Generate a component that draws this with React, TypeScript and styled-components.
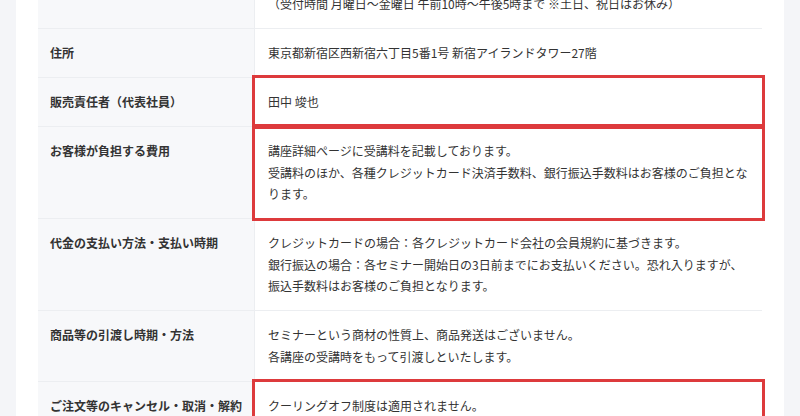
import React from "react";
import styled, { createGlobalStyle } from "styled-components";

const GlobalStyle = createGlobalStyle`
  html, body { margin: 0; padding: 0; }
  body {
    background: #f4f5f8;
    font-family: "Noto Sans CJK JP", "Noto Sans", sans-serif;
    color: #333;
    -webkit-font-smoothing: antialiased;
  }
`;

const Page = styled.div`
  padding: 0 16px;
  height: 416px;
  overflow: hidden;
`;

const Card = styled.div`
  background: #fff;
  padding: 0 22px;
  height: 416px;
  overflow: hidden;
`;

const Table = styled.div`
  margin-top: -41.5px;
  display: flex;
  flex-direction: column;
`;

const Row = styled.div`
  display: grid;
  grid-template-columns: 217px 1fr;
  border-bottom: 1px solid #eceef1;
`;

const Label = styled.div`
  background: #f7f8fa;
  border-right: 1px solid #eceef1;
  padding: 13.25px 12px;
  font-size: 12px;
  line-height: 21.5px;
  font-weight: 700;
  color: #333;
`;

const Value = styled.div<{ $marked?: boolean }>`
  padding: 13.25px 13px;
  font-size: 12px;
  line-height: 21.5px;
  color: #333;
  position: relative;
  z-index: ${(p) => (p.$marked ? 1 : 0)};
  outline: ${(p) => (p.$marked ? "3px solid #dd3a3c" : "none")};
`;

const Line = styled.div``;

type Item = { label: string; lines: string[]; marked?: boolean };

const items: Item[] = [
  {
    label: "電話番号",
    lines: [
      "03-0000-0000",
      "（受付時間 月曜日〜金曜日 午前10時〜午後5時まで ※土日、祝日はお休み）",
    ],
  },
  { label: "住所", lines: ["東京都新宿区西新宿六丁目5番1号 新宿アイランドタワー27階"] },
  { label: "販売責任者（代表社員）", lines: ["田中 竣也"], marked: true },
  {
    label: "お客様が負担する費用",
    lines: [
      "講座詳細ページに受講料を記載しております。",
      "受講料のほか、各種クレジットカード決済手数料、銀行振込手数料はお客様のご負担となります。",
    ],
    marked: true,
  },
  {
    label: "代金の支払い方法・支払い時期",
    lines: [
      "クレジットカードの場合：各クレジットカード会社の会員規約に基づきます。",
      "銀行振込の場合：各セミナー開始日の3日前までにお支払いください。恐れ入りますが、振込手数料はお客様のご負担となります。",
    ],
  },
  {
    label: "商品等の引渡し時期・方法",
    lines: [
      "セミナーという商材の性質上、商品発送はございません。",
      "各講座の受講時をもって引渡しといたします。",
    ],
  },
  {
    label: "ご注文等のキャンセル・取消・解約",
    lines: ["クーリングオフ制度は適用されません。", "お申込み後のキャンセルにつきましては、各講座の規約に準じます。"],
    marked: true,
  },
];

export default function App() {
  return (
    <>
      <GlobalStyle />
      <Page>
        <Card>
          <Table>
            {items.map((it) => (
              <Row key={it.label}>
                <Label>{it.label}</Label>
                <Value $marked={it.marked}>
                  {it.lines.map((l, i) => (
                    <Line key={i}>{l}</Line>
                  ))}
                </Value>
              </Row>
            ))}
          </Table>
        </Card>
      </Page>
    </>
  );
}
